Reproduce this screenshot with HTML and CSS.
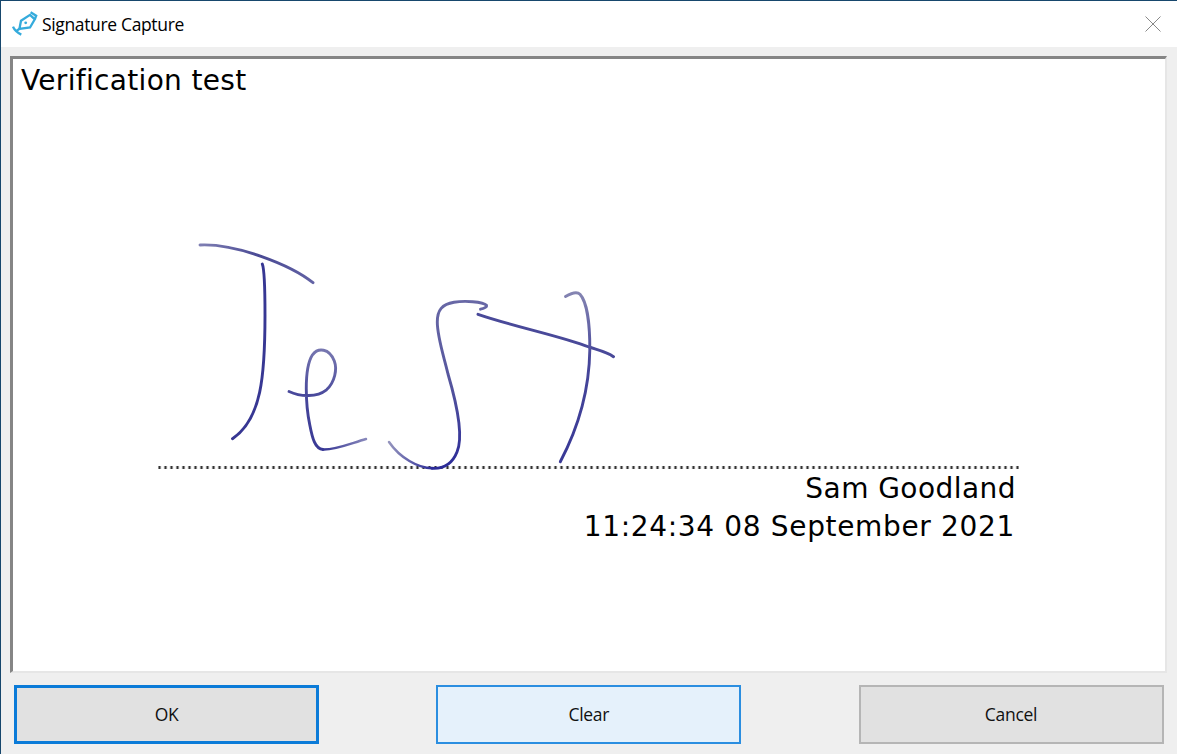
FILE: index.html
```html
<!DOCTYPE html>
<html lang="en">
<head>
<meta charset="utf-8">
<title>Signature Capture</title>
<link rel="stylesheet" href="styles.css">
</head>
<body>
<div class="window">
  <header class="titlebar">
    <svg class="app-icon" width="26" height="26" viewBox="0 0 26 26" fill="none" stroke="#35abdc" stroke-width="2.300">
      <path d="M7.4 19L9 10.8L18 4.900L22.800 9.300L18 17.500Z"/>
      <path d="M18.600 2.200L24.200 5.800L22.800 9.300"/>
      <path d="M1 16.600Q3 21.400 9.300 24.600M4.800 20.600L7.500 18.700"/>
      <circle cx="13.700" cy="12.800" r="1.400" fill="#35abdc" stroke="none"/>
    </svg>
    <h1 class="title"><span>Signature Capture</span></h1>
    <svg class="close" width="16" height="16" viewBox="0 0 16 16" stroke="#888" stroke-width="1"><path d="M.5 .5L15.5 15.5M15.5 .5L.5 15.5"/></svg>
  </header>
  <main class="content">
    <section class="pad">
      <div class="reason"><span>Verification test</span></div>
      <div class="sign-area">
        <svg class="ink" width="460" height="236" viewBox="180 236 460 236">
          <defs>
            <linearGradient id="bar" gradientUnits="userSpaceOnUse" x1="199" y1="244" x2="313" y2="283"><stop offset="0" stop-color="#8080b4"/><stop offset=".5" stop-color="#494994"/><stop offset="1" stop-color="#6262a4"/></linearGradient>
            <linearGradient id="loop" gradientUnits="userSpaceOnUse" x1="330" y1="350" x2="315" y2="450"><stop offset="0" stop-color="#7777b0"/><stop offset=".5" stop-color="#46469a"/><stop offset="1" stop-color="#393996"/></linearGradient>
            <linearGradient id="tail" gradientUnits="userSpaceOnUse" x1="325" y1="0" x2="366" y2="0"><stop offset="0" stop-color="#393996"/><stop offset="1" stop-color="#8888bb"/></linearGradient>
            <linearGradient id="sweep" gradientUnits="userSpaceOnUse" x1="389" y1="0" x2="432" y2="0"><stop offset="0" stop-color="#9494bd"/><stop offset="1" stop-color="#2b2b98"/></linearGradient>
            <linearGradient id="ess" gradientUnits="userSpaceOnUse" x1="450" y1="300" x2="450" y2="468"><stop offset="0" stop-color="#6868a6"/><stop offset=".5" stop-color="#55559d"/><stop offset="1" stop-color="#2b2b98"/></linearGradient>
            <linearGradient id="hook" gradientUnits="userSpaceOnUse" x1="575" y1="292" x2="575" y2="462"><stop offset="0" stop-color="#8585b2"/><stop offset=".4" stop-color="#47479a"/><stop offset="1" stop-color="#393996"/></linearGradient>
          </defs>
          <path stroke="url(#bar)" d="M200 245C236 243.300 291 265 313 282.700"/>
          <path stroke="#373793" d="M262.300 264C264.300 269 265 286 265 315C265 376 261.500 419 232.500 438.700"/>
          <path stroke="url(#loop)" d="M289 391.500C301 397 317 397.300 326.500 389.800C335 382 337.300 369 334.300 361C329.300 348 318 347.300 312.500 354.800C303.300 369 306 407 309.800 425C312.300 438 315 449 323 449.500"/>
          <path class="thin" stroke="url(#tail)" d="M323 449.500C335 450 349 444 366 439"/>
          <path class="thin" stroke="url(#sweep)" d="M389 442C400 458 418 468 432 468.300"/>
          <path stroke="url(#ess)" d="M432 468.300C445 469 453 462 457 452C463 438 458 408 448 374C443.500 355 437.300 337 437.300 322C437.300 310 442 304.300 454 302.300C464 300.500 483 301.500 486.500 305.300C487 307 484 308.500 480.500 309.200"/>
          <path stroke="#494999" d="M478 314.300C515 327 562 336.300 589 347C598 350 607 352 613.500 356.700"/>
          <path stroke="url(#hook)" d="M565.500 296.500C571 293.300 577 291.300 580 294.300C587 302 590 325 589.800 350C589.300 391 577 430 560.300 461.700"/>
        </svg>
        <div class="rule"></div>
      </div>
      <div class="signer"><span class="name">Sam Goodland</span><span class="date">11:24:34 08 September 2021</span></div>
    </section>
    <footer class="actions">
      <button class="btn primary"><span>OK</span></button>
      <button class="btn hover"><span>Clear</span></button>
      <button class="btn"><span>Cancel</span></button>
    </footer>
  </main>
</div>
</body>
</html>
```
FILE: styles.css
```css
* { box-sizing: border-box; }
body { margin: 0; overflow: hidden; }
.window {
  width: 1177px; height: 754px;
  display: flex; flex-direction: column;
  border-top: 1px solid #17476d; border-left: 1px solid #17476d;
  background: #efefef;
}
.titlebar {
  height: 46px; flex: none;
  display: flex; align-items: center;
  padding: 0 16px 0 11px;
  background: #fff;
}
.app-icon { margin-top: -2px; }
.title {
  margin: 1px 0 0 4px; flex: 1;
  font: 400 17.5px/23px "Open Sans", "Noto Sans", sans-serif;
  letter-spacing: -.35px; color: #000;
}
.close { margin-top: -1px; }
.content { padding: 9px 10px 0 9px; }
.pad {
  height: 617px;
  display: flex; flex-direction: column;
  border-style: solid;
  border-width: 3px 2px 2px 3px;
  border-color: #858585 #e6e6e6 #e6e6e6 #858585;
  background: #fff;
  font: 28px/38px "DejaVu Sans", Verdana, sans-serif;
  color: #000;
}
.reason { height: 39px; padding: 3px 0 0 8px; letter-spacing: .32px; }
.sign-area { margin-top: 138px; padding-left: 145px; }
.ink {
  display: block; margin-left: 22px;
  fill: none; stroke-width: 2.9; stroke-linecap: round; stroke-linejoin: round;
}
.thin { stroke-width: 2.5; }
.rule {
  width: 861px; height: 3px; margin-top: -6px;
  background: repeating-linear-gradient(90deg, #8a8a8a 0 1px, #333 1px 2px, #8a8a8a 2px 3px, #f0f0f0 3px 4px, #fff 4px 5px, #f0f0f0 5px 6px);
}
.signer { display: flex; flex-direction: column; align-items: flex-end; padding: 1px 149px 0 0; }
.name { letter-spacing: .45px; }
.date { letter-spacing: .66px; margin-right: 1px; }
.actions { display: flex; justify-content: space-between; padding: 12px 3.500px 0 4px; }
.btn {
  width: 305px; height: 59px; padding: 0 0 2px;
  border: 2px solid #b5b5b5; background: #e1e1e1;
  font: 17.5px/24px "Open Sans", "Noto Sans", sans-serif;
  letter-spacing: -.3px; color: #111;
}
.primary { border: 3px solid #0b7bd8; }
.hover { border-color: #2b8ee0; background: #e5f1fb; }
```
